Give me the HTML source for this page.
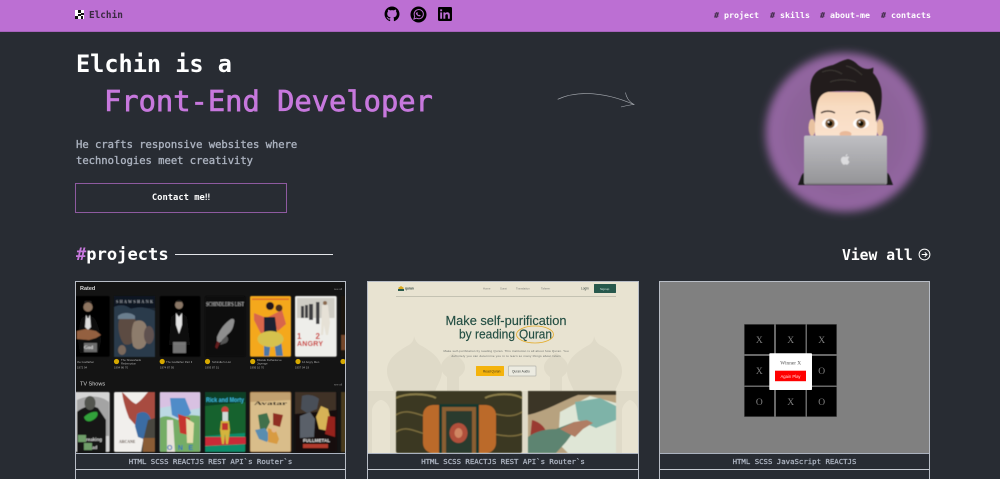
<!DOCTYPE html>
<html lang="en"><head><meta charset="utf-8"><title>Elchin</title>
<style>
*{margin:0;padding:0;box-sizing:border-box}
html,body{width:1000px;height:479px;overflow:hidden;background:#282c33}
body{position:relative;font-family:"DejaVu Sans Mono","Liberation Mono",monospace;color:#abb2bf}
.a{position:absolute;white-space:pre}
#hdr{position:absolute;left:0;top:0;width:1000px;height:32px;background:#bc6fd3;border-bottom:1px solid #a662bb}
.nav{font-size:8.3px;font-weight:bold;color:#fff;top:10px;line-height:11px}
.nav i{font-style:normal;color:#3a2a42}
.card{position:absolute;top:281px;height:198px;border:1px solid #b8bdc6;border-bottom:0}
.tags{position:absolute;left:0;right:0;top:171px;height:17px;background:#282c33;border-top:1px solid #abb2bf;border-bottom:1px solid #c8ccd3;text-align:center;font-size:7.35px;line-height:15px;color:#abb2bf;white-space:pre;-webkit-text-stroke:.3px #abb2bf}
svg{position:absolute;display:block}
</style></head><body>
<div id="hdr"></div>
<svg style="left:75px;top:10px" width="9" height="9" viewBox="0 0 9 9"><rect width="9" height="9" fill="#fff"/><path d="M3 0h3v3H3zM6 3h3v2H6zM3 4h3v2H3zM0 6h3v3H0zM6 6h2v3H6z" fill="#111"/></svg>
<div class="a" style="left:89px;top:10px;font-size:9.4px;line-height:12px;font-weight:bold;color:#3a2a42">Elchin</div>

<svg style="left:383px;top:5px" width="18" height="18" viewBox="0 0 24 24"><path fill="#000" d="M12.026 2c-5.509 0-9.974 4.465-9.974 9.974 0 4.406 2.857 8.145 6.821 9.465.499.09.679-.217.679-.481 0-.237-.008-.865-.011-1.696-2.775.602-3.361-1.338-3.361-1.338-.452-1.152-1.107-1.459-1.107-1.459-.905-.619.069-.605.069-.605 1.002.07 1.527 1.028 1.527 1.028.89 1.524 2.336 1.084 2.902.829.091-.645.351-1.085.635-1.334-2.214-.251-4.542-1.107-4.542-4.93 0-1.087.389-1.979 1.024-2.675-.101-.253-.446-1.268.099-2.64 0 0 .837-.269 2.742 1.021a9.582 9.582 0 0 1 2.496-.336 9.554 9.554 0 0 1 2.496.336c1.906-1.291 2.742-1.021 2.742-1.021.545 1.372.203 2.387.099 2.64.64.696 1.024 1.587 1.024 2.675 0 3.833-2.33 4.675-4.552 4.922.355.308.675.916.675 1.846 0 1.334-.012 2.41-.012 2.737 0 .267.178.577.687.479C19.146 20.115 22 16.379 22 11.974 22 6.465 17.535 2 12.026 2z"/></svg>
<svg style="left:410px;top:6px" width="17" height="17" viewBox="0 0 17 17"><circle cx="8.5" cy="8.5" r="8" fill="#000"/><path d="M3.9 13.1l.8-2.8a4.6 4.6 0 1 1 1.9 1.9z" fill="none" stroke="#bc6fd3" stroke-width="1"/><path d="M6.6 6.2c.5-.4.8-.2 1 .4l.2.6-.4.5c.4.7.9 1.2 1.6 1.5l.5-.5.9.4c.3.2.3.6 0 .9-.6.6-1.5.5-2.5-.1-1-.6-1.7-1.4-2-2.3-.1-.4.2-.7.7-.9z" fill="#bc6fd3"/></svg>
<svg style="left:438px;top:7px" width="14" height="14" viewBox="0 0 14 14"><rect width="14" height="14" rx="1.2" fill="#000"/><path d="M2.2 5.4h1.9v6.4H2.2zM2.2 2.4h1.9v1.8H2.2zM5.4 5.4h1.8v.9c.4-.6 1.1-1.1 2.1-1.1 1.8 0 2.5 1.1 2.5 2.9v3.7H9.9V8.6c0-.9-.3-1.5-1.1-1.5-.9 0-1.5.6-1.5 1.6v3.1H5.4z" fill="#bc6fd3"/></svg>

<div class="a nav" style="left:714px"><i>#</i> project</div>
<div class="a nav" style="left:770px"><i>#</i> skills</div>
<div class="a nav" style="left:820px"><i>#</i> about-me</div>
<div class="a nav" style="left:881px"><i>#</i> contacts</div>

<div class="a" style="left:76px;top:50px;font-size:23.55px;line-height:28px;color:#fff;font-weight:bold">Elchin is a</div>
<div class="a" style="left:104px;top:84px;font-size:28.75px;line-height:34px;color:#c778dd;-webkit-text-stroke:.7px #c778dd">Front-End Developer</div>
<div class="a" style="left:76px;top:137px;font-size:10.5px;line-height:16px;color:#abb2bf;-webkit-text-stroke:.35px #abb2bf">He crafts responsive websites where
technologies meet creativity</div>
<div class="a" style="left:75px;top:183px;width:212px;height:30px;border:1px solid #8e5aa0;text-align:center;font-size:8.8px;line-height:29px;font-weight:bold;color:#fff">Contact me‼</div>

<svg style="left:550px;top:85px" width="90" height="25" viewBox="550 85 90 25" fill="none" stroke="#a9adb3" stroke-width=".6"><path d="M557.7 99.3C572 92.5 598 89 634 104.5"/><path d="M625.5 92.5c.5 4 3 9 8.5 12-4.5.3-9 1.5-13 2.5"/></svg>

<!-- avatar -->
<svg style="left:750px;top:40px" width="190" height="190" viewBox="750 40 190 190">
<defs><filter id="b" x="-20%" y="-20%" width="140%" height="140%"><feGaussianBlur stdDeviation="4.2"/></filter>
<filter id="sf"><feGaussianBlur stdDeviation=".4"/></filter>
<linearGradient id="lap" x1="0" y1="0" x2="0" y2="1"><stop offset="0" stop-color="#bfbfc3"/><stop offset="1" stop-color="#949497"/></linearGradient>
<linearGradient id="skin" x1="0" y1="0" x2="0" y2="1"><stop offset="0" stop-color="#f3cfae"/><stop offset=".3" stop-color="#f8dcc2"/><stop offset="1" stop-color="#fbe3cf"/></linearGradient>
<radialGradient id="pur"><stop offset="0" stop-color="#84648c"/><stop offset=".7" stop-color="#8d649a"/><stop offset="1" stop-color="#9566a3"/></radialGradient>
</defs>
<circle cx="845" cy="132.500" r="79.500" fill="url(#pur)" filter="url(#b)"/>
<g filter="url(#sf)">
<path d="M798 185l3-8c1-3 3-5 7-6h76c3 1 5 3 6 6l3 8z" fill="#1f1d1f"/>
<ellipse cx="812" cy="127.500" rx="3.500" ry="8.500" fill="#e8c2a0"/><ellipse cx="880" cy="127.500" rx="3.500" ry="8.500" fill="#e8c2a0"/>
<path d="M815 92h62v42c0 4-12 8-31 8s-31-4-31-8z" fill="url(#skin)"/>
<path d="M815 122C813 114 811 104 810.500 95C809.500 86 811 79 814 75C817 70 824 67 833 65C836 64 840 61 848 59C852 60 855 62 857 64C860 67 864 69 868 69C870 69 872 68 873.500 67.500L873 73C876 76 879 81 881 88C882.500 95 881.500 106 880 112C879 116 877 120 876 122C875.500 115 875 108 873 102C871 97 868 93 863 92C852 90.500 839 90.500 828 92C823 93 820 96 818 101C816 107 815.500 115 815 122Z" fill="#221f1e"/>
<path d="M822 72c8-3 14-2 20 2M846 66c6 1 12 5 16 9M830 82c8-3 18-3 26 0" stroke="#3a3633" stroke-width="1.200" fill="none"/>
<path d="M821 113c4-2.500 10-2.500 14 0M856 113c4-2.500 10-2.500 14 0" stroke="#3c2f2a" stroke-width="1.400" fill="none"/>
<ellipse cx="830" cy="123.500" rx="8" ry="5.200" fill="#fff"/><ellipse cx="861" cy="123.500" rx="8" ry="5.200" fill="#fff"/>
<circle cx="830" cy="123.500" r="4.800" fill="#86633f"/><circle cx="861" cy="123.500" r="4.800" fill="#86633f"/>
<circle cx="830" cy="123.500" r="2.700" fill="#0d0806"/><circle cx="861" cy="123.500" r="2.700" fill="#0d0806"/>
<circle cx="828.500" cy="122" r=".9" fill="#fff"/><circle cx="859.500" cy="122" r=".9" fill="#fff"/>
<ellipse cx="845.500" cy="134" rx="6" ry="3" fill="#e9b99a"/>
<rect x="804" y="135.500" width="83" height="49" rx="2" fill="url(#lap)"/>
<rect x="806" y="183" width="79" height="1.500" fill="#7f7f82"/>
<path d="M845.5 157c-1-.6-2.500-.6-3.500.2-1.500 1.300-1.300 4 .1 6 .8 1.200 1.500 1.800 2.300 1.400.7-.3 1.300-.3 2 0 .8.400 1.500-.2 2.300-1.400l.8-1.600c-1.800-.8-2-3.400-.2-4.400-.9-1-2.400-.9-3.800-.2zM845.500 156.500c0-1.300.9-2.400 2-2.500 0 1.300-.8 2.400-2 2.500z" fill="#dcdcde"/>
</g>
</svg>

<div class="a" style="left:76px;top:245px;font-size:17.1px;line-height:21px;color:#fff;font-weight:bold"><span style="color:#c778dd">#</span>projects</div>
<div class="a" style="left:175px;top:254px;width:158px;height:1px;background:#e4e6ea"></div>
<div class="a" style="left:842px;top:245px;font-size:14.7px;line-height:21px;color:#fff;font-weight:bold">View all</div>
<svg style="left:918px;top:248px" width="13" height="13" viewBox="0 0 13 13" fill="none" stroke="#fff" stroke-width="1"><circle cx="6.5" cy="6.5" r="5.4"/><path d="M3.7 6.5h5.200M6.800 4.300l2.200 2.200-2.200 2.200"/></svg>

<!-- CARD 1 -->
<div class="card" style="left:75px;width:271px">
<svg style="left:0;top:0" width="269" height="171" viewBox="76 282 269 171">
<defs><filter id="s"><feGaussianBlur stdDeviation=".55"/></filter>
<clipPath id="c1"><rect x="76" y="282" width="269" height="171"/></clipPath></defs>
<rect x="76" y="282" width="269" height="171" fill="#141414"/>
<g font-family="Liberation Sans,sans-serif" fill="#d8d8d8">
<text x="80" y="290" font-size="5.500" font-weight="bold">Rated</text>
<text x="80" y="385.500" font-size="5.500">TV Shows</text>
<text x="334" y="290" font-size="2.800" fill="#888">see all</text>
<text x="334" y="385.500" font-size="2.800" fill="#888">see all</text>
<g font-size="2.800" fill="#aaa">
<text x="77" y="363">the Godfather</text><text x="77" y="368.500">1972 94</text>
<text x="121" y="361">The Shawshank</text><text x="121" y="364.500">Redemption</text><text x="114" y="368.500">1994 86 70</text>
<text x="166" y="363">The Godfather Part II</text><text x="160" y="368.500">1974 87 95</text>
<text x="212" y="363">Schindler's List</text><text x="205" y="368.500">1993 87 51</text>
<text x="257" y="361">Dilwale Dulhania Le</text><text x="257" y="364.500">Jayenge</text><text x="250" y="368.500">1995 10 70</text>
<text x="302" y="363">12 Angry Men</text><text x="295" y="368.500">1957 04 19</text>
</g></g>
<g fill="#d7a900"><circle cx="116.500" cy="361.500" r="2.600"/><circle cx="162.200" cy="361.500" r="2.600"/><circle cx="207.500" cy="361.500" r="2.600"/><circle cx="252.700" cy="361.500" r="2.600"/><circle cx="298" cy="361.500" r="2.600"/><circle cx="343" cy="361.500" r="2.600"/></g>
<g filter="url(#s)" clip-path="url(#c1)">
<!-- p1 godfather -->
<rect x="70" y="296" width="39.700" height="60.700" rx="1.500" fill="#050505"/>
<path d="M78 340c1-11 2-19 4-22l6-3 6 3c3 4 6 13 7 23l-3 12H80z" fill="#111"/>
<circle cx="88" cy="307" r="4.600" fill="#8e7460"/><path d="M84 304c2-3 6-3 8 0l-1-3h-6z" fill="#2d2a28"/>
<path d="M86 315l2 3 2-3 1 12-3 3-3-3z" fill="#ddd"/><path d="M87 317h2v1h-2z" fill="#000"/>
<path d="M77 331l9-2 10 2 5 4-5 3-7 2-12-1z" fill="#94603f"/>
<rect x="84" y="343" width="13" height="9" fill="#b8b8b8" opacity=".55"/>
<text x="84" y="349" font-family="Liberation Serif,serif" font-size="5" fill="#ddd" font-weight="bold">God</text>
<!-- p2 shawshank -->
<rect x="114" y="296" width="41" height="60.700" rx="1.500" fill="#1c2733"/>
<rect x="114" y="296" width="41" height="12" fill="#0e1520"/>
<text x="116" y="303" font-family="Liberation Serif,serif" font-size="4" fill="#c5cbd2" textLength="37">SHAWSHANK</text>
<path d="M114 307c6-3 13-2 17 2 5-2 14-3 24 2v46h-41z" fill="#293a4c"/>
<path d="M119 320c3-4 10-5 15-2 4 4 5 12 2 20-3 6-8 8-12 6-4-4-7-16-5-24z" fill="#5b4c42"/>
<path d="M118 316c4-4 13-4 17 0v3h-17z" fill="#6a7e8e"/>
<path d="M134 322c4-3 10-2 12 3 3 8 2 17-2 22-4 3-8 3-11-1-2-8-2-18 1-24z" fill="#8d7b6c"/>
<ellipse cx="149" cy="335" rx="5" ry="9" fill="#5e5150"/>
<ellipse cx="122" cy="350" rx="4" ry="5" fill="#7a695c"/>
<!-- p3 -->
<rect x="159.700" y="296" width="40.700" height="60.700" rx="1.500" fill="#040404"/>
<circle cx="179" cy="305" r="4" fill="#8a7766"/><path d="M175 303c1-4 7-4 8 0l-1-1h-6z" fill="#22201f"/>
<path d="M169 345l2-28 8-6 8 6 3 28z" fill="#0d0d0d"/>
<path d="M176 313l3 4 3-4 0 12-3 9-3-9z" fill="#e2e2e2"/><path d="M177.500 314h3v1.500h-3z" fill="#000"/>
<rect x="173" y="342" width="13" height="11" fill="#bcbcbc" opacity=".6"/>
<!-- p4 schindler -->
<rect x="205" y="296" width="40.700" height="60.700" rx="1.500" fill="#070707"/>
<text x="206" y="306" font-family="Liberation Serif,serif" font-size="6.500" fill="#cfcfcf" textLength="38" lengthAdjust="spacingAndGlyphs">SCHINDLER'S LIST</text>
<path d="M217 337c3-8 8-14 14-18 3-1 4 1 3 4-1 6-3 9-7 12-2 4-6 8-10 8z" fill="#8e8e8e"/>
<path d="M226 336c3 1 3 5 0 7l-6 2 2-5z" fill="#555"/>
<path d="M217 341l-2 6 2 2 3-6z" fill="#631a1e"/>
<!-- p5 DDLJ -->
<rect x="250" y="296" width="41" height="60.700" rx="1.500" fill="#f4a81c"/>
<rect x="252" y="298.500" width="37" height="1.500" fill="#d6552d" opacity=".7"/>
<path d="M254 313l10 4 4 10-2 11-6-6-6-12z" fill="#d8664b"/>
<path d="M268 317l14-7 4 14-8 7z" fill="#d8664b"/>
<path d="M264 317h11l2 16h-13z" fill="#1e2430"/>
<circle cx="270" cy="306" r="4" fill="#23191a"/><circle cx="279" cy="308" r="3.500" fill="#4a2d1d"/>
<path d="M264 340h7l-2 16h-5zM274 340h7l2 16h-7z" fill="#4c78a6"/>
<ellipse cx="270.500" cy="339" rx="13" ry="8" fill="#d6c24e"/>
<!-- p6 12 angry -->
<rect x="295" y="296" width="41.700" height="60.700" rx="1.500" fill="#eeeeea"/>
<rect x="297" y="298" width="37.500" height="20" fill="#cfcdc5"/>
<g fill="#3f4042"><rect x="301" y="306" width="3" height="12"/><rect x="305" y="305" width="3" height="13"/><rect x="309" y="304" width="4" height="16"/><rect x="316" y="302" width="3.500" height="22"/></g>
<path d="M322 305h6l2 18-2 12h-2l-2-10-1 10h-2z" fill="#e6e1d6"/><circle cx="325" cy="303" r="2" fill="#8b6a50"/>
<g font-family="Liberation Sans,sans-serif" font-weight="bold" fill="#c9211e"><text x="297" y="339" font-size="8" textLength="23">12</text><text x="297" y="346" font-size="7" textLength="26">ANGRY</text></g>
<rect x="341" y="296" width="10" height="60.700" fill="#1a120c"/><rect x="341" y="335" width="5" height="15" fill="#74462a"/>
<!-- row 2 -->
<rect x="70" y="392" width="39.700" height="60" rx="1.500" fill="#d5d5d5"/>
<path d="M77 400c10-5 24-5 32 2v34H77z" fill="#5b5b5b" opacity=".4"/>
<path d="M77 426v-14c4-4 10-5 13-7l8 3 8 12v32H77z" fill="#131613"/>
<ellipse cx="90" cy="403" rx="5.500" ry="7" fill="#525550"/>
<path d="M84 417c4-4 10-6 13-5 2 3-1 7-6 9-3 1-6 0-7-4z" fill="#33a23a"/>
<rect x="78" y="435" width="8" height="7" fill="#6f9e6a"/><rect x="84" y="443" width="8" height="7" fill="#6f9e6a"/>
<text x="86" y="441" font-family="Liberation Sans,sans-serif" font-weight="bold" font-size="4.500" fill="#ddd">reaking</text>
<text x="92" y="449" font-family="Liberation Sans,sans-serif" font-weight="bold" font-size="4.500" fill="#ddd">ad</text>
<rect x="114" y="392" width="41" height="60" rx="1.500" fill="#f1efec"/>
<path d="M122 392c5 4 8 9 14 12 6-4 10-10 12-12h7v30l-7 8-10-2-9-10c-3-8-6-17-7-26z" fill="#a84b41"/>
<path d="M137 414c6-4 12-2 14 6l1 12-6 8-8-3-3-11z" fill="#3b6ca3"/>
<path d="M148 420l7-2v34h-14l2-11z" fill="#4a4641"/>
<rect x="143" y="438" width="12" height="14" fill="#8a5c34"/>
<text x="119" y="443" font-family="Liberation Serif,serif" font-size="3.800" fill="#5b4c44" font-weight="bold">ARCANE</text>
<rect x="159.700" y="392" width="40.700" height="60" rx="1.500" fill="#bcd9e3"/>
<path d="M160 392h40v16l-10 2-14-5-16 3z" fill="#d8c1e2"/>
<path d="M170 398h15l6 15-7 8-12-6z" fill="#4f8cc8"/>
<path d="M160 418c7-4 12 0 18 2 8-6 16-5 22-4v36h-40z" fill="#74ad66"/>
<path d="M167 420h6l2 32h-8z" fill="#e6e2d8"/><path d="M178 414l12 4-2 17-8-2z" fill="#c6362d"/><path d="M186 418l8 5-1 20h-6z" fill="#e6ddaa"/>
<text x="167" y="450" font-family="Liberation Sans,sans-serif" font-weight="bold" font-size="7" fill="#3670b8" textLength="26">ONE</text>
<rect x="205" y="392" width="40.700" height="60" rx="1.500" fill="#14622f"/>
<path d="M205 392h41v10l-41 4z" fill="#0b3f28"/>
<text x="206" y="402" font-family="Liberation Sans,sans-serif" font-weight="bold" font-size="6" fill="#3dbbe0" textLength="38" lengthAdjust="spacingAndGlyphs">Rick and Morty</text>
<path d="M205 436l40-3v19h-40z" fill="#0e8c6a"/>
<path d="M205 437h41v7l-41 2z" fill="#c92c38"/>
<circle cx="225" cy="410" r="3.500" fill="#c9433a"/><rect x="222.500" y="412" width="5.500" height="9" fill="#ced9d6"/>
<path d="M221 421h8l1 9-2 14h-2l-1-10-1 10h-2l-2-14z" fill="#d4b43c"/><path d="M222 423h6v7h-6z" fill="#c0342e"/>
<rect x="250" y="392" width="41" height="60" rx="1.500" fill="#d9bd8a"/>
<path d="M250 392h41v8l-41 2z" fill="#a98455" opacity=".5"/>
<text x="254" y="405" font-family="Liberation Serif,serif" font-weight="bold" font-size="5.500" fill="#1f1a14" textLength="33" lengthAdjust="spacingAndGlyphs">Avatar</text>
<path d="M258 415l9-2 3 9-5 10-5-3z" fill="#41704b"/><path d="M273 413l10 2-3 12-7-2z" fill="#8f2d22"/>
<path d="M255 430l10-2 5 8-3 6-8-3z" fill="#5a8db0"/><path d="M268 428l8 3 3 8-2 5-9-2z" fill="#d89b42"/><circle cx="274" cy="430" r="2.500" fill="#e2b78d"/>
<rect x="250" y="392" width="41" height="60" rx="1.500" fill="none" stroke="#94683a" stroke-width=".8"/>
<rect x="295" y="392" width="41.700" height="60" rx="1.500" fill="#15100d"/>
<path d="M295 392h41v18l-41 4z" fill="#3f3225"/>
<path d="M302 396c5-2 13-1 17 3l-2 10-10 4-6-4z" fill="#4a4f58"/>
<path d="M321 406l7 3 2 8-2 14-9-2-3-12z" fill="#d7b256"/>
<path d="M328 416l7 1v20l-10-3z" fill="#96241c"/>
<path d="M300 416l10-4 5 7-1 18-14 1z" fill="#5a6069"/>
<text x="303" y="442" font-family="Liberation Sans,sans-serif" font-weight="bold" font-size="4.500" fill="#e8e8e8" textLength="27">FULLMETAL</text>
<rect x="303" y="444" width="25" height="4" fill="#b23b2e"/>
<rect x="341" y="392" width="10" height="60" fill="#4a3a1e"/>
</g>
</svg>
<div class="tags">HTML SCSS REACTJS REST API`s Router`s</div>
</div>

<!-- CARD 2 -->
<div class="card" style="left:367px;width:272px">
<svg style="left:0;top:0" width="270" height="171" viewBox="368 282 270 171">
<defs><filter id="s2"><feGaussianBlur stdDeviation=".5"/></filter></defs>
<rect x="368" y="282" width="270" height="171" fill="#e8e3d1"/>
<g fill="#dfdac8">
<path d="M395 395c-2-9-8-15-8-24 0-12 10-19 20-25 5-2 7-6 7-10 1 4 3 8 8 10 10 6 20 13 20 25 0 9-6 15-8 24z"/>
<path d="M575 395c-2-9-8-15-8-24 0-12 10-19 20-25 5-2 7-6 7-10 1 4 3 8 8 10 10 6 20 13 20 25 0 9-6 15-8 24z"/>
<path d="M447 395v-18c-4-3-6-6-6-10 0-6 7-11 12-14 5 3 12 8 12 14 0 4-2 7-6 10v18z"/>
<path d="M550 395v-18c-4-3-6-6-6-10 0-6 7-11 12-14 5 3 12 8 12 14 0 4-2 7-6 10v18z"/>
<rect x="368" y="391" width="270" height="62"/>
</g>
<g fill="#e8e3d1"><path d="M372 453v-42c0-6 6-11 9-11s9 5 9 11v42zM622 453v-42c0-6 6-11 8-11s8 5 8 11v42z"/></g>
<path d="M398 288l3-2 3 2-3 3z" fill="#d9a81c"/><rect x="398" y="289" width="6" height="2" fill="#2a5a4b"/>
<g font-family="Liberation Sans,sans-serif">
<text x="405" y="289.500" font-size="3.200" font-weight="bold" fill="#31453f">quran</text>
<g font-size="2.800" fill="#80807a"><text x="483" y="289.500">Home</text><text x="500" y="289.500">Surat</text><text x="516" y="289.500">Translation</text><text x="541" y="289.500">Tafseer</text></g>
<text x="581" y="289.500" font-size="3.200" fill="#33423d">Login</text>
</g>
<rect x="594" y="284" width="22" height="9" rx=".6" fill="#27584c"/>
<text x="600" y="290" font-family="Liberation Sans,sans-serif" font-size="3" fill="#cde0da">Signup</text>
<rect x="396" y="296" width="220" height=".7" fill="#b5b3a6"/>
<g font-family="Liberation Sans,sans-serif" fill="#234e43" stroke="#234e43" stroke-width=".15">
<text x="506" y="325" font-size="13" text-anchor="middle" textLength="121" lengthAdjust="spacingAndGlyphs">Make self-purification</text>
<text x="459" y="338.500" font-size="13" textLength="56" lengthAdjust="spacingAndGlyphs">by reading</text>
<text x="519" y="338.500" font-size="13" textLength="33" lengthAdjust="spacingAndGlyphs">Quran</text>
</g>
<g font-family="Liberation Sans,sans-serif" font-size="3" fill="#6d706c"><text x="506" y="352" text-anchor="middle" textLength="125">Make self-purification by reading Quran. This institution is all about how Quran. You</text><text x="506" y="357" text-anchor="middle" textLength="109">definitely you can determine you in to learn so many things about Islam</text></g>
<ellipse cx="535" cy="334.500" rx="18.500" ry="8.500" fill="none" stroke="#e4ac2a" stroke-width=".8"/>
<rect x="476" y="366" width="28" height="10" rx=".6" fill="#f4b30c"/>
<text x="483" y="372.500" font-family="Liberation Sans,sans-serif" font-size="3.200" fill="#42351a">Read Quran</text>
<rect x="508.500" y="366" width="27.500" height="10" rx=".8" fill="#ecebe1" stroke="#b1b2aa" stroke-width=".7"/>
<text x="512" y="372.500" font-family="Liberation Sans,sans-serif" font-size="3.200" fill="#3a3f3c">Quran Audio</text>
<g filter="url(#s2)">
<rect x="396" y="391" width="126" height="62" rx="2" fill="#3a3720"/>
<path d="M396 398c10-5 30-5 40 0M485 398c10-5 28-5 37 0" stroke="#8a7d49" stroke-width="2" fill="none"/>
<path d="M396 415c15-10 30 8 45 0M478 416c15-8 28 6 44-4M396 432c12-8 22 2 32 2M478 436c14-6 28 4 44-2" stroke="#7a6c3e" stroke-width="1.500" fill="none"/>
<rect x="423" y="405" width="73" height="48" rx="10" fill="#bb6a2a"/>
<rect x="439" y="404" width="40" height="49" fill="#14382e"/>
<rect x="442" y="407" width="34" height="46" fill="#8a5f30"/>
<rect x="446" y="411" width="26" height="42" fill="#2a3b2e"/>
<ellipse cx="458.500" cy="433" rx="9" ry="10" fill="#b1503a"/>
<ellipse cx="458.500" cy="433" rx="4" ry="5" fill="#d08664"/>
<rect x="528" y="391" width="88" height="62" rx="2" fill="#d9c9a8"/>
<path d="M528 391h88v8l-40 8-48 8z" fill="#3b3527"/>
<path d="M528 415c18-4 34-14 50-20l38 0v8l-28 18-20 32h-40z" fill="#b7a27f"/>
<path d="M532 420c8 2 14 8 14 13l-16 6z" fill="#9a3a30"/>
<path d="M560 412l30-16 26 7v50h-48l-10-10z" fill="#dfe6d6"/>
<path d="M575 402l25-4 16 8v14l-20 8-18-8z" fill="#7eb3a8"/>
<path d="M528 437c8-6 18-8 28-8l18-7 10 2-12 10-6 8-10 11h-28z" fill="#5d8471"/>
<path d="M560 429l14-7 13-2 6 3-10 6-8 8z" fill="#b07d63"/>
</g>
</svg>
<div class="tags">HTML SCSS REACTJS REST API`s Router`s</div>
</div>

<!-- CARD 3 -->
<div class="card" style="left:659px;width:271px">
<svg style="left:0;top:0" width="269" height="171" viewBox="660 282 269 171">
<rect x="660" y="282" width="269" height="171" fill="#808080"/>
<g fill="#000" stroke="#585858" stroke-width=".6">
<rect x="744.300" y="324.300" width="30" height="30"/><rect x="775.700" y="324.300" width="30" height="30"/><rect x="806.700" y="324.300" width="30" height="30"/>
<rect x="744.300" y="355.700" width="30" height="30"/><rect x="775.700" y="355.700" width="30" height="30"/><rect x="806.700" y="355.700" width="30" height="30"/>
<rect x="744.300" y="386.700" width="30" height="30"/><rect x="775.700" y="386.700" width="30" height="30"/><rect x="806.700" y="386.700" width="30" height="30"/>
</g>
<g font-family="Liberation Serif,serif" font-size="9.500" fill="#808080" text-anchor="middle">
<text x="759.300" y="343">X</text><text x="790.700" y="343">X</text><text x="821.700" y="343">X</text>
<text x="759.300" y="374">X</text><text x="821.700" y="374">O</text>
<text x="759.300" y="405">O</text><text x="790.700" y="405">X</text><text x="821.700" y="405">O</text>
</g>
<rect x="769.300" y="353.300" width="42.700" height="36.700" rx=".8" fill="#fff"/>
<text x="790.700" y="364.500" font-family="Liberation Serif,serif" font-size="5.300" fill="#555" text-anchor="middle">Winner X</text>
<rect x="775" y="370.700" width="31" height="10.500" fill="#f00"/>
<text x="790.500" y="377.800" font-family="Liberation Sans,sans-serif" font-size="4.200" fill="#ffd8d8" text-anchor="middle">Again Play</text>
</svg>
<div class="tags">HTML SCSS JavaScript REACTJS</div>
</div>
</body></html>
